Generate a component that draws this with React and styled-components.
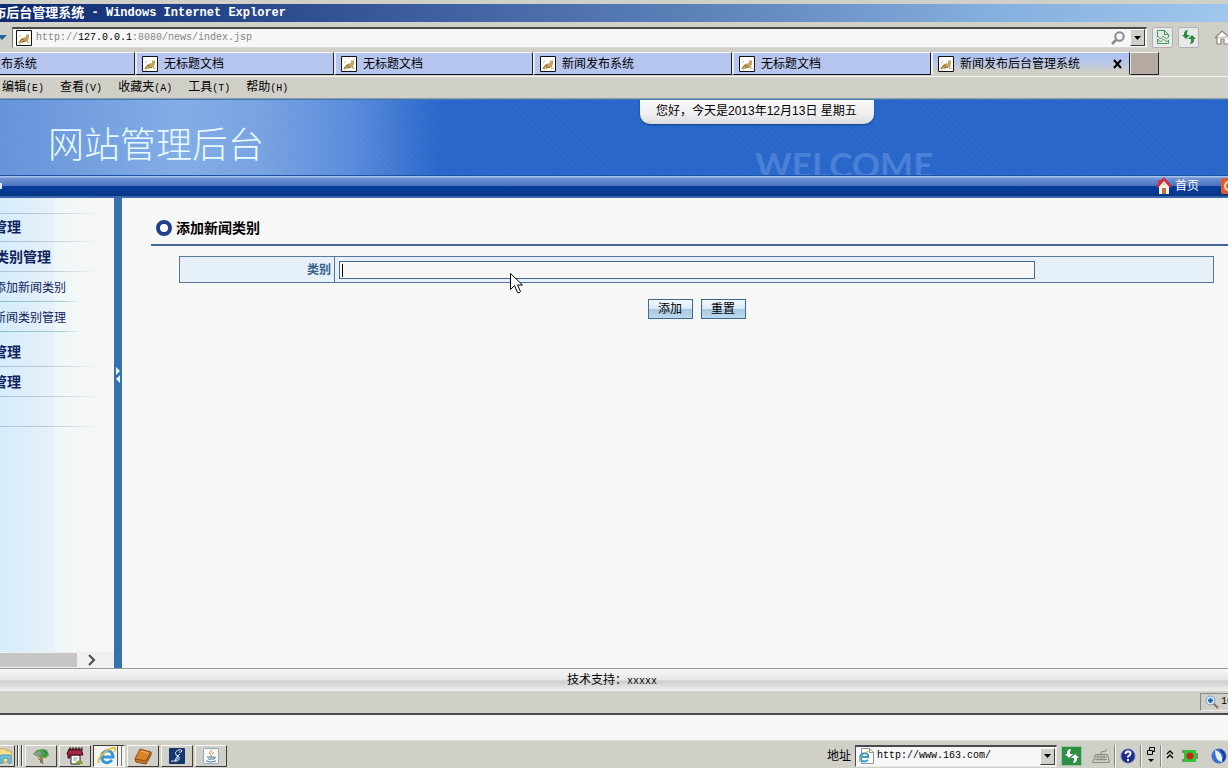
import React from 'react';
import styled, { createGlobalStyle, css } from 'styled-components';

const GlobalStyle = createGlobalStyle`
	* {
		box-sizing: border-box;
	}
	body {
		margin: 0;
		background: #f7f7f7;
		color: #000;
		font: 12px/16px 'Liberation Sans', 'Noto Sans CJK SC', sans-serif;
	}
	button, input {
		font: inherit;
		color: inherit;
	}
	a {
		color: inherit;
		text-decoration: none;
	}
`;

const tabs = ['新闻发布系统', '无标题文档', '无标题文档', '新闻发布系统', '无标题文档'];

const menus = [
	['编辑', 'E'],
	['查看', 'V'],
	['收藏夹', 'A'],
	['工具', 'T'],
	['帮助', 'H'],
];

//Icons
const PageIcon = () => (
	<Icon width="16" height="16" viewBox="0 0 16 16">
		<path d="M.5.5h15v15H.5z" fill="#fff" stroke="#111" />
		<path d="M2 13l3-4 1-1 4-1V4l1 1 2-1v4l-1 2 1 3-3-2-2 1-3 1z" fill="#c8a35c" />
		<path d="M3 12l3-3 2 1M6 12l3-1 1 1" fill="none" stroke="#86704a" />
		<path d="M3 7l2-2M3 14h2M11 13l3-1" stroke="#d8bd84" />
	</Icon>
);

const SearchIcon = () => (
	<Icon width="16" height="16" viewBox="0 0 16 16" fill="none" stroke="#8a8a8a">
		<circle cx="9.500" cy="6.500" r="4.200" strokeWidth="2" />
		<path d="M6 10l-4 4" strokeWidth="2.500" />
	</Icon>
);

const DownArrow = () => (
	<Icon width="7" height="4" viewBox="0 0 7 4">
		<path d="M0 0h7L3.500 4z" fill="#000" />
	</Icon>
);

const BrokenPage = () => (
	<Icon width="14" height="16" viewBox="0 0 14 16" fill="none" stroke="#3f9a52">
		<path d="M1.500 8V1.500h7l4 4V8M8.500 1.500v4h4M1.500 7l3 3 3-3 3 3 2-2M1.500 10l3 3 3-3 3 3 2-2M1.500 10v4.500h11V11" />
	</Icon>
);

const RefreshIcon = ({ color }) => (
	<Icon width="16" height="16" viewBox="0 0 16 16" fill={color}>
		<path d="M7 1L6 4v2h3L5 10 1 6h2V4q1-3 4-3z" />
		<path d="M9 15l1-3v-2H7l4-4 4 4h-2v2q-1 3-4 3z" />
	</Icon>
);

const BrowserHome = () => (
	<Icon width="14" height="16" viewBox="0 0 14 16">
		<path d="M1 9L8 2l8 7M3 8v7h4v-5h3v5h5V7" fill="#fdfdf8" stroke="#8d8376" strokeWidth="1.200" />
	</Icon>
);

const HomeIcon = () => (
	<Icon width="16" height="18" viewBox="0 0 16 18">
		<path d="M3 9l5-5 5 5v8H3z" fill="#f8efe5" />
		<path d="M2 3h3v4H2z" fill="#c63c3c" />
		<path d="M1 10l7-8 7 8" fill="none" stroke="#d42b38" strokeWidth="2.500" />
		<path d="M6 11h4v6H6z" fill="#bd7436" />
		<path d="M7 6h2v2H7z" fill="#d9c7ab" />
	</Icon>
);

const ExitIcon = () => (
	<Icon width="7" height="16" viewBox="0 0 7 16">
		<rect width="16" height="16" rx="2" fill="#e45d28" />
		<circle cx="8" cy="8" r="4" fill="none" stroke="#ffe1cd" strokeWidth="2" />
	</Icon>
);

const RingIcon = () => (
	<Icon width="16" height="16" viewBox="0 0 16 16">
		<circle cx="8" cy="8" r="6" fill="#fff" stroke="#20408c" strokeWidth="4" />
	</Icon>
);

const IeIcon = ({ size = 20 }) => (
	<Icon width={size} height={size} viewBox="0 0 20 20" fill="none">
		<path d="M15 14q-5 5-9 1-3-4 0-8 4-4 8-1 2 2 2 5H6" stroke="#3199d8" strokeWidth="3" />
		<path d="M2 17Q0 13 7 7q7-6 11-5 1 1-1 4" stroke="#e3bd36" strokeWidth="1.700" />
	</Icon>
);

const PageIeIcon = () => (
	<Icon width="16" height="18" viewBox="0 0 16 18" fill="none">
		<path d="M3.500 1.500h8l4 4v11h-12z" fill="#fff" stroke="#8794a3" />
		<path d="M11.500 1.500v4h4" stroke="#8794a3" />
		<path d="M10 13q-4 3-7 0-2-4 1-6 4-2 6 1v2H3" stroke="#3698d4" strokeWidth="2" />
		<path d="M1 15q0-4 5-8t6-3" stroke="#c9b52d" />
	</Icon>
);

const FolderIcon = () => (
	<Icon width="14" height="20" viewBox="0 0 14 20">
		<path d="M-2 3h8l1 2h4v11H-2z" fill="#f2df8d" stroke="#c9ad4f" />
		<path d="M0 17v-6q0-2 2-2h6q3 0 3 2v6H8v-5H3v5z" fill="#73c9e4" stroke="#4594b5" />
	</Icon>
);

const TreeIcon = () => (
	<Icon width="20" height="20" viewBox="0 0 20 20">
		<path d="M2 8l4-4 5-1 5 1 2 5-3 3-6-1-4-1z" fill="#4da14c" />
		<path d="M2 8l6-3 3 3-5 2z" fill="#8f9f96" />
		<path d="M6 10l3 2v5h3v-6l3 1" fill="#a47f53" />
		<path d="M12 4l4 3-3 3" stroke="#23722f" fill="none" />
		<path d="M7 12l3 3 2 3" stroke="#5b6d62" fill="none" />
	</Icon>
);

const NotebookIcon = () => (
	<Icon width="20" height="20" viewBox="0 0 20 20">
		<path d="M6 9h9v9H6z" fill="#fff" stroke="#222" />
		<path d="M4 3h12l2 6H5v3H3V9l-1-1z" fill="#aa2340" stroke="#380914" />
		<path d="M5 1v4M8 1v4M11 1v4M14 1v4M17 1v4" stroke="#222" />
		<path d="M8 12h5M8 14h4" stroke="#999" />
		<path d="M10 18q2-5 7-3l1 3z" fill="#7aa332" />
	</Icon>
);

const BookIcon = () => (
	<Icon width="20" height="20" viewBox="0 0 20 20">
		<path d="M2 13L7 3l11 3-5 10z" fill="#d9822b" stroke="#8c4c13" />
		<path d="M2 13l1 3 10 2 5-9V6l-5 9z" fill="#c77a2a" stroke="#8c4c13" />
		<path d="M8 5l7 2-1 2" fill="none" stroke="#efb066" />
	</Icon>
);

const PenIcon = () => (
	<Icon width="20" height="20" viewBox="0 0 20 20">
		<rect x="2" y="2" width="16" height="16" rx="1" fill="#14386b" />
		<path d="M4 15q5 1 7-3 1-3-2-3-2-3 2-5 4-1 4 1-1 2-3 1M11 10q3 3-1 5-3 1-2-1 2-4 5-6" fill="none" stroke="#d7e5f4" />
	</Icon>
);

const JavaIcon = () => (
	<Icon width="20" height="20" viewBox="0 0 20 20" fill="none">
		<rect x="2.500" y="2.500" width="15" height="15" rx="1" fill="#f5f7f8" stroke="#8eaac1" />
		<path d="M11 4q-4 2-2 4 2 1 1 3M13 6l-2 2" stroke="#e2863b" />
		<path d="M6 11h7M7 13h6M5 15q5 2 10 0M13 11q3 0 0 2" stroke="#4b7799" />
	</Icon>
);

const App = () => {
	return (
		<>
			<GlobalStyle />
			<Screen>
				<TitleBar>
					<TitleText>
						布后台管理系统<b>&nbsp;- Windows Internet Explorer</b>
					</TitleText>
				</TitleBar>
				<AddressRow>
					<Icon width="7" height="5" viewBox="0 0 7 5">
						<path d="M-3 0H7L2 5z" fill="#24639c" />
					</Icon>
					<AddressBox>
						<PageIcon />
						<Url href="#address">
							http://<b>127.0.0.1</b>:8080/news/index.jsp
						</Url>
						<SearchIcon />
						<DropButton aria-label="address list">
							<DownArrow />
						</DropButton>
					</AddressBox>
					<ToolButton aria-label="compatibility view">
						<BrokenPage />
					</ToolButton>
					<ToolButton aria-label="refresh">
						<RefreshIcon color="#2c8c3c" />
					</ToolButton>
					<HomeButton aria-label="browser home">
						<BrowserHome />
					</HomeButton>
				</AddressRow>
				<TabStrip>
					{tabs.map((name, i) => (
						<Tab key={i}>
							<PageIcon />
							<span>{name}</span>
						</Tab>
					))}
					<Tab $active>
						<PageIcon />
						<span>新闻发布后台管理系统</span>
						<Icon width="10" height="10" viewBox="0 0 10 10">
							<path d="M1 1l7 8M8 1L1 9" stroke="#000" strokeWidth="2" />
						</Icon>
					</Tab>
					<NewTab aria-label="new tab" />
				</TabStrip>
				<MenuBar>
					{menus.map(([name, letter]) => (
						<MenuButton key={letter}>
							{name}
							<Mono>({letter})</Mono>
						</MenuButton>
					))}
				</MenuBar>

				<Banner>
					<SiteName>网站管理后台</SiteName>
					<DateBadge>您好，今天是2013年12月13日 星期五</DateBadge>
					<Welcome>WELCOME</Welcome>
				</Banner>
				<NavBar>
					<NavTick />
					<NavLink href="#home">
						<HomeIcon />
						首页
					</NavLink>
					<ExitIcon />
				</NavBar>

				<Workspace>
					<Sidebar>
						<MenuSpace $height={16} />
						<Group href="#news" $height={28} $end={21}>
							<span>管理</span>
						</Group>
						<Group href="#category" $end={51}>
							<span>类别管理</span>
						</Group>
						<SubLink href="#add">
							<span>添加新闻类别</span>
						</SubLink>
						<SubLink href="#list">
							<span>新闻类别管理</span>
						</SubLink>
						<Group href="#comment" $height={35} $end={21}>
							<span>管理</span>
						</Group>
						<Group href="#user" $end={21}>
							<span>管理</span>
						</Group>
						<MenuSpace $height={30} />
						<ScrollBar>
							<Thumb />
							<Icon width="10" height="12" viewBox="0 0 10 12">
								<path d="M2 1l5 5-5 5" fill="none" stroke="#505050" strokeWidth="2.200" />
							</Icon>
						</ScrollBar>
					</Sidebar>
					<Splitter aria-label="toggle sidebar">
						<Icon width="6" height="18" viewBox="0 0 6 18" fill="#e8fbff">
							<path d="M1 1l4 4-4 4zM5 9v8l-4-4z" />
						</Icon>
					</Splitter>
					<Content>
						<Heading>
							<RingIcon />
							添加新闻类别
						</Heading>
						<Form onSubmit={(e) => e.preventDefault()}>
							<FormTable>
								<tbody>
									<tr>
										<th>
											<label htmlFor="category">类别</label>
										</th>
										<td>
											<Field>
												<input id="category" type="text" />
												<Caret />
											</Field>
										</td>
									</tr>
								</tbody>
							</FormTable>
							<Actions>
								<FormButton type="submit">添加</FormButton>
								<FormButton type="reset">重置</FormButton>
							</Actions>
						</Form>
						<Pointer width="13" height="22" viewBox="0 0 13 22">
							<path d="M.5.5v16l4-4 3 7q1.500 1.500 3-1l-3-6.500h5z" fill="#fff" stroke="#000" />
						</Pointer>
					</Content>
				</Workspace>

				<Footer>
					技术支持：<Mono>xxxxx</Mono>
				</Footer>
				<StatusBar>
					<Zoom>
						<Icon width="14" height="14" viewBox="0 0 14 14">
							<path d="M8 8l5 5" stroke="#8b7355" strokeWidth="2" />
							<circle cx="5.500" cy="5.500" r="4.500" fill="#d6ebfb" stroke="#6d9fca" />
							<path d="M5.500 3v5M3 5.500h5" stroke="#17609f" strokeWidth="2" />
						</Icon>
						<Mono>100%</Mono>
					</Zoom>
				</StatusBar>
				<Gap />

				<TaskBar>
					<TaskButton $cut aria-label="files">
						<FolderIcon />
					</TaskButton>
					<Grip />
					<Grip />
					<TaskButton aria-label="tree">
						<TreeIcon />
					</TaskButton>
					<TaskButton aria-label="notebook">
						<NotebookIcon />
					</TaskButton>
					<TaskButton $active aria-label="browser">
						<IeIcon />
					</TaskButton>
					<TaskButton aria-label="book">
						<BookIcon />
					</TaskButton>
					<TaskButton aria-label="pen">
						<PenIcon />
					</TaskButton>
					<TaskButton aria-label="java">
						<JavaIcon />
					</TaskButton>
					<Tray>
						<label htmlFor="desk-url">地址</label>
						<TrayAddress>
							<PageIeIcon />
							<input id="desk-url" type="text" defaultValue="http://www.163.com/" />
							<DropButton aria-label="url list">
								<DownArrow />
							</DropButton>
						</TrayAddress>
						<GoButton aria-label="go">
							<RefreshIcon color="#fff" />
						</GoButton>
						<Icon width="24" height="16" viewBox="-6 0 24 16" fill="none" stroke="#8b8b84">
							<path d="M3.500 6.500h12l2 8H.5zM9 6V4l5-1V1M3 9h12M3 11.500h12M6 7v6M9 7v6M12 7v6" />
						</Icon>
						<Divider />
						<Icon width="16" height="16" viewBox="0 0 16 16">
							<circle cx="8" cy="8" r="7" fill="#1c2f8e" stroke="#6975b5" />
							<path d="M5.500 6q0-2.500 2.500-2.500t2.500 2q0 1.500-2.500 3v1M8 11v2" fill="none" stroke="#fff" strokeWidth="2" />
						</Icon>
						<Divider />
						<Icon width="10" height="20" viewBox="0 0 10 20">
							<path d="M3.500 4V1.500h5v4H7M1.500 4.500h5v4h-5z" fill="none" stroke="#000" />
							<path d="M2 13h6l-3 3z" />
						</Icon>
						<Divider />
						<Icon width="8" height="12" viewBox="0 0 8 12" fill="none" stroke="#000" strokeWidth="1.300">
							<path d="M1 4l3-3 3 3M1 8l3-3 3 3" />
						</Icon>
						<TrayIcons>
							<Icon width="16" height="14" viewBox="0 0 16 14">
								<path d="M2 1h12v12H2z" fill="#31c638" />
								<circle cx="8" cy="7" r="3.500" fill="#c62b18" />
								<path d="M1 1v3M1 10v3M15 4v6" stroke="#1c4f20" />
							</Icon>
							<Icon width="16" height="16" viewBox="0 0 16 16">
								<circle cx="8" cy="8" r="7.500" fill="#3d6fce" />
								<path d="M4 2q8 2 7 12Q4 13 4 2z" fill="#e4f0ff" />
								<path d="M9 2q7 4 3 11" stroke="#17338b" strokeWidth="2" fill="none" />
							</Icon>
						</TrayIcons>
					</Tray>
				</TaskBar>
			</Screen>
		</>
	);
};

const Icon = styled.svg`
	display: block;
	flex: none;
`;

const Screen = styled.div`
	display: flex;
	flex-direction: column;
	min-height: 100vh;
	overflow: hidden;
`;

const raised = css`
	border: 1px solid;
	border-color: #f8f8f4 #3c3c3c #3c3c3c #f8f8f4;
	background: #d0cfc8;
`;

const Mono = styled.span`
	font-family: 'Liberation Mono', monospace;
	font-size: 10px;
`;

const TitleBar = styled.div`
	height: 22px;
	border-top: 4px solid #d0cfc8;
	background: linear-gradient(90deg, #0d2a70, #37579a 30%, #6187bd 60%, #84aedd 80%, #9fc7ee);
`;

const TitleText = styled.div`
	display: flex;
	justify-content: flex-end;
	width: 286px;
	overflow: hidden;
	white-space: nowrap;
	color: #fff;
	font-size: 13px;
	line-height: 18px;
	font-weight: bold;
	b {
		font-family: 'Liberation Mono', monospace;
		font-size: 12px;
	}
`;

const AddressRow = styled.div`
	display: flex;
	align-items: center;
	gap: 5px;
	height: 30px;
	background: #d0cfc8;
`;

const AddressBox = styled.div`
	flex: 1;
	display: flex;
	align-items: center;
	gap: 4px;
	height: 21px;
	padding: 0 1px 0 3px;
	background: #f7f7f7;
	border: 1px solid;
	border-top: 2px solid;
	border-color: #4a4a4a #f7f7f7 #d8d8d0 #777;
`;

const Url = styled.a`
	flex: 1;
	font-family: 'Liberation Mono', monospace;
	font-size: 10px;
	color: #858585;
	b {
		font-weight: normal;
		color: #000;
	}
`;

const DropButton = styled.button`
	${raised}
	display: flex;
	align-items: center;
	justify-content: center;
	width: 15px;
	height: 17px;
	padding: 0;
`;

const ToolButton = styled.button`
	display: flex;
	align-items: center;
	justify-content: center;
	width: 21px;
	height: 21px;
	padding: 0;
	border: 1px solid #b0b0b4;
	border-radius: 2px;
	background: #e8e8ea;
`;

const HomeButton = styled.button`
	margin-left: 10px;
	padding: 0;
	border: 0;
	background: none;
`;

const TabStrip = styled.div`
	display: flex;
	height: 25px;
	margin-left: -64px;
	padding-bottom: 1px;
	background: #d0cfc8;
	border-bottom: 1px solid #f4f4f0;
`;

const Tab = styled.button`
	flex: none;
	display: flex;
	align-items: center;
	gap: 6px;
	width: 199px;
	padding: 0 6px 0 5px;
	border: 1px solid;
	border-left-width: 2px;
	border-color: #f4f4f4 #222 #111 #e8ebf4;
	background: #b6c6ef;
	span {
		flex: 1;
		text-align: left;
	}
	${({ $active }) =>
		$active &&
		css`
			border-bottom-color: #d0cfc8;
			background: linear-gradient(#a9c0f1, #b9c8e8 45%, #d0cfc8 90%);
		`}
`;

const NewTab = styled.button`
	width: 29px;
	padding: 0;
	border: 1px solid;
	border-color: #f4f4f4 #222 #222 #e4e4e4;
	background: #b5aaa2;
`;

const MenuBar = styled.div`
	display: flex;
	gap: 16px;
	height: 22px;
	padding-left: 2px;
	background: #d0cfc8;
	border-bottom: 1px solid #8b9cab;
`;

const MenuButton = styled.button`
	padding: 0;
	border: 0;
	background: none;
	white-space: nowrap;
`;

const Banner = styled.header`
	position: relative;
	height: 76px;
	overflow: hidden;
	border-top: 1px solid #4479b8;
	background:
		repeating-linear-gradient(45deg, rgba(255, 255, 255, 0.03) 0 1px, transparent 1px 4px),
		linear-gradient(90deg, #6493da, #83ace6 180px, #78a3e1 260px, #5a8cdb 350px, #2866ca 440px);
`;

const SiteName = styled.h1`
	margin: 0;
	padding-left: 48px;
	color: #e6fbff;
	font-size: 36px;
	line-height: 92px;
	font-weight: 300;
`;

const DateBadge = styled.div`
	position: absolute;
	top: 0;
	left: 640px;
	height: 24px;
	padding: 0 17px 0 16px;
	line-height: 22px;
	white-space: nowrap;
	border-radius: 0 0 10px 10px;
	background: linear-gradient(#fafafa, #eeeef0 60%, #dcdcde);
	box-shadow: 0 1px 2px #153f83;
`;

const Welcome = styled.div`
	position: absolute;
	top: 44px;
	left: 755px;
	color: #4a80d6;
	font: bold 35px/40px Lato, sans-serif;
`;

const NavBar = styled.nav`
	display: flex;
	align-items: center;
	gap: 22px;
	height: 23px;
	border-top: 1px solid #1d52a3;
	border-bottom: 2px solid #3b68aa;
	background: linear-gradient(#a3c2ec 0 1px, #7295d5 2px, #4870bd 10px, #073da0 10px, #063783);
`;

const NavTick = styled.span`
	width: 2px;
	height: 6px;
	margin-right: auto;
	background: #dce9f8;
`;

const NavLink = styled.a`
	display: flex;
	align-items: center;
	gap: 3px;
	color: #fff;
`;

const Workspace = styled.div`
	flex: 1;
	display: flex;
	background: #f7f7f7;
`;

const Sidebar = styled.aside`
	display: flex;
	flex-direction: column;
	width: 114px;
	overflow: hidden;
	background: linear-gradient(90deg, #d5edfb, #dfeff9 30px, #e8f1f8 54px, #eff7f8 56px, #f3f7f7 80px, #f7f7f7 100px);
`;

const fadeLine = css`
	background: linear-gradient(90deg, #a9c4d4, #bccbd6 50px, transparent 100px) bottom / 100% 1px no-repeat;
`;

const MenuSpace = styled.div`
	${fadeLine}
	height: ${({ $height }) => $height}px;
`;

const Group = styled.a`
	${fadeLine}
	display: flex;
	align-items: flex-end;
	height: ${({ $height = 30 }) => $height}px;
	color: #12235f;
	font-size: 14px;
	line-height: 30px;
	font-weight: bold;
	span {
		display: flex;
		justify-content: flex-end;
		width: ${({ $end }) => $end}px;
		white-space: nowrap;
	}
`;

const SubLink = styled.a`
	height: 30px;
	color: #12235f;
	line-height: 32px;
	background: linear-gradient(90deg, #8fbccd, #a5c9d4 60px, transparent 80px) bottom / 100% 1px no-repeat;
	span {
		display: flex;
		justify-content: flex-end;
		width: 66px;
		white-space: nowrap;
	}
`;

const ScrollBar = styled.div`
	display: flex;
	align-items: center;
	gap: 10px;
	height: 16px;
	margin-top: auto;
	background: #f0f0f0;
`;

const Thumb = styled.div`
	width: 77px;
	height: 14px;
	background: #c6c6c6;
`;

const Splitter = styled.button`
	display: flex;
	align-items: center;
	width: 8px;
	padding: 0 0 116px 1px;
	border: 0;
	background: #3570b0;
`;

const Content = styled.main`
	position: relative;
	flex: 1;
	padding: 13px 0 0 29px;
`;

const Heading = styled.h2`
	display: flex;
	align-items: center;
	gap: 4px;
	height: 35px;
	margin: 0;
	padding-left: 5px;
	border-bottom: 2px solid #45659b;
	font-size: 14px;
`;

const Form = styled.form`
	margin: 10px 14px 0 28px;
`;

const FormTable = styled.table`
	width: 100%;
	border-collapse: collapse;
	th, td {
		height: 26px;
		border: 1px solid #56779a;
		background: #e6f0f8;
	}
	th {
		width: 15%;
		padding: 0 3px;
		text-align: right;
		color: #34608f;
	}
	td {
		padding: 0 4px;
	}
`;

const Field = styled.div`
	position: relative;
	width: 80%;
	input {
		display: block;
		width: 100%;
		height: 18px;
		padding: 0 2px;
		border: 1px solid #4a6888;
		background: #f7f7f7;
		outline: none;
	}
`;

const Caret = styled.span`
	position: absolute;
	top: 3px;
	left: 3px;
	width: 1px;
	height: 13px;
	background: #000;
`;

const Actions = styled.div`
	display: flex;
	justify-content: center;
	gap: 8px;
	margin-top: 16px;
`;

const FormButton = styled.button`
	width: 45px;
	height: 20px;
	padding: 0;
	line-height: 18px;
	border: 1px solid #3d6a92;
	background: linear-gradient(#f2f8fc, #d8e9f5 50%, #a9c9e0 52%, #bcd9ee);
`;

const Pointer = styled.svg`
	position: absolute;
	top: 75px;
	left: 388px;
`;

const Footer = styled.footer`
	height: 23px;
	border-top: 1px solid #999;
	line-height: 22px;
	text-align: center;
	padding-right: 4px;
	background: linear-gradient(#f7f7f7, #e6e6e6 11px, #cdcdcd 12px, #f0f0f0);
`;

const StatusBar = styled.div`
	display: flex;
	justify-content: flex-end;
	height: 24px;
	padding: 2px 0;
	background: #d0cfc8;
	border-bottom: 2px solid #4b4b4b;
`;

const Zoom = styled.div`
	display: flex;
	align-items: center;
	gap: 2px;
	width: 28px;
	padding-left: 4px;
	border: 1px solid #888;
	border-right: 0;
	border-bottom-color: #eee;
	overflow: hidden;
`;

const Gap = styled.div`
	height: 25px;
	background: #f7f7f7;
`;

const TaskBar = styled.div`
	display: flex;
	align-items: center;
	gap: 2px;
	height: 28px;
	padding-top: 2px;
	background: #d0cfc8;
	border-top: 1px solid #dfdfd8;
`;

const TaskButton = styled.button`
	${raised}
	display: flex;
	align-items: center;
	justify-content: center;
	width: ${({ $cut }) => ($cut ? 15 : 32)}px;
	height: 22px;
	padding: 0;
	${({ $cut }) => $cut && 'border-left: 0;'}
	${({ $active }) =>
		$active &&
		css`
			padding-right: 5px;
			border-color: #3c3c3c #f8f8f8 #f8f8f8 #3c3c3c;
			background: linear-gradient(90deg, #f2f2ee 23px, #555 23px 24px, #f2f2ee 24px 27px, #777 27px 28px, #f2f2ee 28px);
		`}
`;

const Grip = styled.span`
	width: 2px;
	height: 21px;
	border-left: 1px solid #444;
	border-right: 1px solid #fff;
`;

const Tray = styled.div`
	display: flex;
	align-items: center;
	gap: 4px;
	height: 24px;
	margin-left: auto;
`;

const TrayAddress = styled.div`
	display: flex;
	align-items: center;
	gap: 3px;
	width: 202px;
	height: 22px;
	padding: 0 1px 0 2px;
	border: 1px solid;
	border-top: 2px solid;
	border-color: #4a4a4a #e8e8e8 #e8e8e8 #4a4a4a;
	background: #f7f7f7;
	input {
		flex: 1;
		min-width: 0;
		padding: 0;
		border: 0;
		background: none;
		font-family: 'Liberation Mono', monospace;
		font-size: 10px;
	}
`;

const GoButton = styled.button`
	display: flex;
	align-items: center;
	justify-content: center;
	width: 21px;
	height: 20px;
	padding: 0;
	border: 1px solid #9fc5a4;
	background: #2d8f45;
`;

const Divider = styled.span`
	width: 2px;
	height: 22px;
	border-left: 1px solid #888;
	border-right: 1px solid #f4f4f4;
`;

const TrayIcons = styled.div`
	display: flex;
	align-items: center;
	gap: 13px;
	padding: 0 1px 0 4px;
`;

export default App;
